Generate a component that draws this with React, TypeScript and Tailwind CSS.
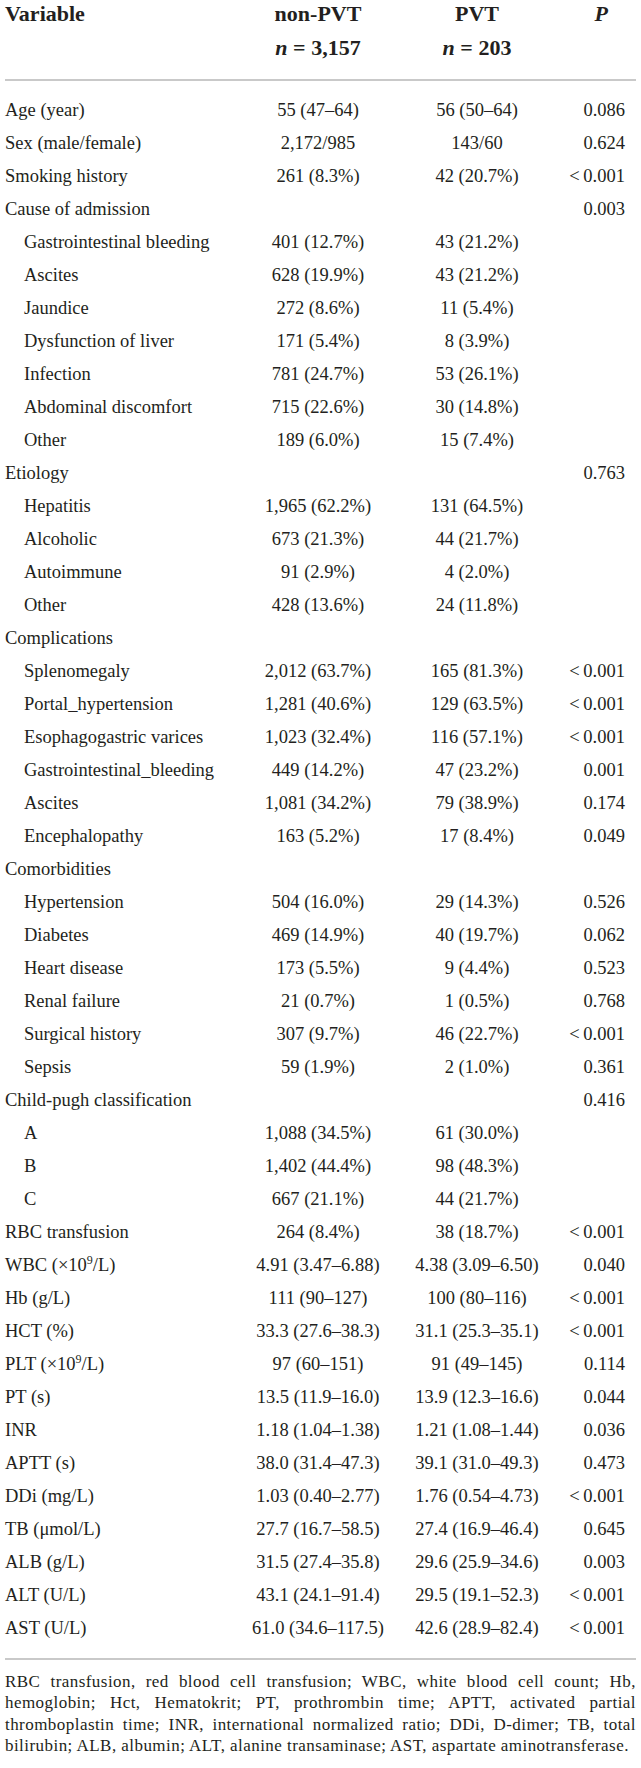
import { ReactNode } from 'react';

type Row = {
    label: ReactNode;
    indent?: boolean;
    a?: string;
    b?: string;
    p?: string;
};

const LT = '<\u20090.001';

const Sup9 = () => <sup className="text-[12px] relative -top-[7px]">9</sup>;

const rows: Row[] = [
    { label: 'Age (year)', a: '55 (47–64)', b: '56 (50–64)', p: '0.086' },
    { label: 'Sex (male/female)', a: '2,172/985', b: '143/60', p: '0.624' },
    { label: 'Smoking history', a: '261 (8.3%)', b: '42 (20.7%)', p: LT },
    { label: 'Cause of admission', p: '0.003' },
    { label: 'Gastrointestinal bleeding', indent: true, a: '401 (12.7%)', b: '43 (21.2%)' },
    { label: 'Ascites', indent: true, a: '628 (19.9%)', b: '43 (21.2%)' },
    { label: 'Jaundice', indent: true, a: '272 (8.6%)', b: '11 (5.4%)' },
    { label: 'Dysfunction of liver', indent: true, a: '171 (5.4%)', b: '8 (3.9%)' },
    { label: 'Infection', indent: true, a: '781 (24.7%)', b: '53 (26.1%)' },
    { label: 'Abdominal discomfort', indent: true, a: '715 (22.6%)', b: '30 (14.8%)' },
    { label: 'Other', indent: true, a: '189 (6.0%)', b: '15 (7.4%)' },
    { label: 'Etiology', p: '0.763' },
    { label: 'Hepatitis', indent: true, a: '1,965 (62.2%)', b: '131 (64.5%)' },
    { label: 'Alcoholic', indent: true, a: '673 (21.3%)', b: '44 (21.7%)' },
    { label: 'Autoimmune', indent: true, a: '91 (2.9%)', b: '4 (2.0%)' },
    { label: 'Other', indent: true, a: '428 (13.6%)', b: '24 (11.8%)' },
    { label: 'Complications' },
    { label: 'Splenomegaly', indent: true, a: '2,012 (63.7%)', b: '165 (81.3%)', p: LT },
    { label: 'Portal_hypertension', indent: true, a: '1,281 (40.6%)', b: '129 (63.5%)', p: LT },
    { label: 'Esophagogastric varices', indent: true, a: '1,023 (32.4%)', b: '116 (57.1%)', p: LT },
    { label: 'Gastrointestinal_bleeding', indent: true, a: '449 (14.2%)', b: '47 (23.2%)', p: '0.001' },
    { label: 'Ascites', indent: true, a: '1,081 (34.2%)', b: '79 (38.9%)', p: '0.174' },
    { label: 'Encephalopathy', indent: true, a: '163 (5.2%)', b: '17 (8.4%)', p: '0.049' },
    { label: 'Comorbidities' },
    { label: 'Hypertension', indent: true, a: '504 (16.0%)', b: '29 (14.3%)', p: '0.526' },
    { label: 'Diabetes', indent: true, a: '469 (14.9%)', b: '40 (19.7%)', p: '0.062' },
    { label: 'Heart disease', indent: true, a: '173 (5.5%)', b: '9 (4.4%)', p: '0.523' },
    { label: 'Renal failure', indent: true, a: '21 (0.7%)', b: '1 (0.5%)', p: '0.768' },
    { label: 'Surgical history', indent: true, a: '307 (9.7%)', b: '46 (22.7%)', p: LT },
    { label: 'Sepsis', indent: true, a: '59 (1.9%)', b: '2 (1.0%)', p: '0.361' },
    { label: 'Child-pugh classification', p: '0.416' },
    { label: 'A', indent: true, a: '1,088 (34.5%)', b: '61 (30.0%)' },
    { label: 'B', indent: true, a: '1,402 (44.4%)', b: '98 (48.3%)' },
    { label: 'C', indent: true, a: '667 (21.1%)', b: '44 (21.7%)' },
    { label: 'RBC transfusion', a: '264 (8.4%)', b: '38 (18.7%)', p: LT },
    { label: <>WBC (×10<Sup9 />/L)</>, a: '4.91 (3.47–6.88)', b: '4.38 (3.09–6.50)', p: '0.040' },
    { label: 'Hb (g/L)', a: '111 (90–127)', b: '100 (80–116)', p: LT },
    { label: 'HCT (%)', a: '33.3 (27.6–38.3)', b: '31.1 (25.3–35.1)', p: LT },
    { label: <>PLT (×10<Sup9 />/L)</>, a: '97 (60–151)', b: '91 (49–145)', p: '0.114' },
    { label: 'PT (s)', a: '13.5 (11.9–16.0)', b: '13.9 (12.3–16.6)', p: '0.044' },
    { label: 'INR', a: '1.18 (1.04–1.38)', b: '1.21 (1.08–1.44)', p: '0.036' },
    { label: 'APTT (s)', a: '38.0 (31.4–47.3)', b: '39.1 (31.0–49.3)', p: '0.473' },
    { label: 'DDi (mg/L)', a: '1.03 (0.40–2.77)', b: '1.76 (0.54–4.73)', p: LT },
    { label: 'TB (μmol/L)', a: '27.7 (16.7–58.5)', b: '27.4 (16.9–46.4)', p: '0.645' },
    { label: 'ALB (g/L)', a: '31.5 (27.4–35.8)', b: '29.6 (25.9–34.6)', p: '0.003' },
    { label: 'ALT (U/L)', a: '43.1 (24.1–91.4)', b: '29.5 (19.1–52.3)', p: LT },
    { label: 'AST (U/L)', a: '61.0 (34.6–117.5)', b: '42.6 (28.9–82.4)', p: LT },
];

// footnote lines as set in the source (justified except the last)
const notes = [
    'RBC transfusion, red blood cell transfusion; WBC, white blood cell count; Hb,',
    'hemoglobin; Hct, Hematokrit; PT, prothrombin time; APTT, activated partial',
    'thromboplastin time; INR, international normalized ratio; DDi, D-dimer; TB, total',
    'bilirubin; ALB, albumin; ALT, alanine transaminase; AST, aspartate aminotransferase.',
];

const cols = 'grid grid-cols-[235px_156px_162px_1fr]';

export default function App() {
    return (
        <div className="w-[641px] bg-white px-[5px] text-[#231f20]" style={{ fontFamily: '"Liberation Serif", "Times New Roman", serif' }}>
            {/* Header */}
            <div className={`${cols} -mt-[3px] pb-[14px] text-[22px] font-bold leading-[34px]`}>
                <div>Variable</div>
                <div className="text-center">
                    <div>non-PVT</div>
                    <div><i>n</i> = 3,157</div>
                </div>
                <div className="text-center">
                    <div>PVT</div>
                    <div><i>n</i> = 203</div>
                </div>
                <div className="pr-[28px] text-right"><i>P</i></div>
            </div>
            <div className="h-[2px] bg-[#c9c9c9]" />

            {/* Body */}
            <div className="pt-[13px] pb-[13px] text-[18.5px] leading-[33px]">
                {rows.map((r, i) => (
                    <div key={i} className={cols}>
                        <div className={`whitespace-nowrap ${r.indent ? 'pl-[19px]' : ''}`}>{r.label}</div>
                        <div className="text-center whitespace-nowrap">{r.a}</div>
                        <div className="text-center whitespace-nowrap">{r.b}</div>
                        <div className="pr-[11px] text-right whitespace-nowrap">{r.p}</div>
                    </div>
                ))}
            </div>
            <div className="h-[2px] bg-[#c9c9c9]" />

            {/* Footnote */}
            <div className="pt-[11px] pb-[12px] text-[17px] leading-[21.4px] tracking-[0.45px]">
                {notes.map((line, i) => (
                    <div key={i} className={i < notes.length - 1 ? 'text-justify [text-align-last:justify]' : ''}>
                        {line}
                    </div>
                ))}
            </div>
        </div>
    );
}
